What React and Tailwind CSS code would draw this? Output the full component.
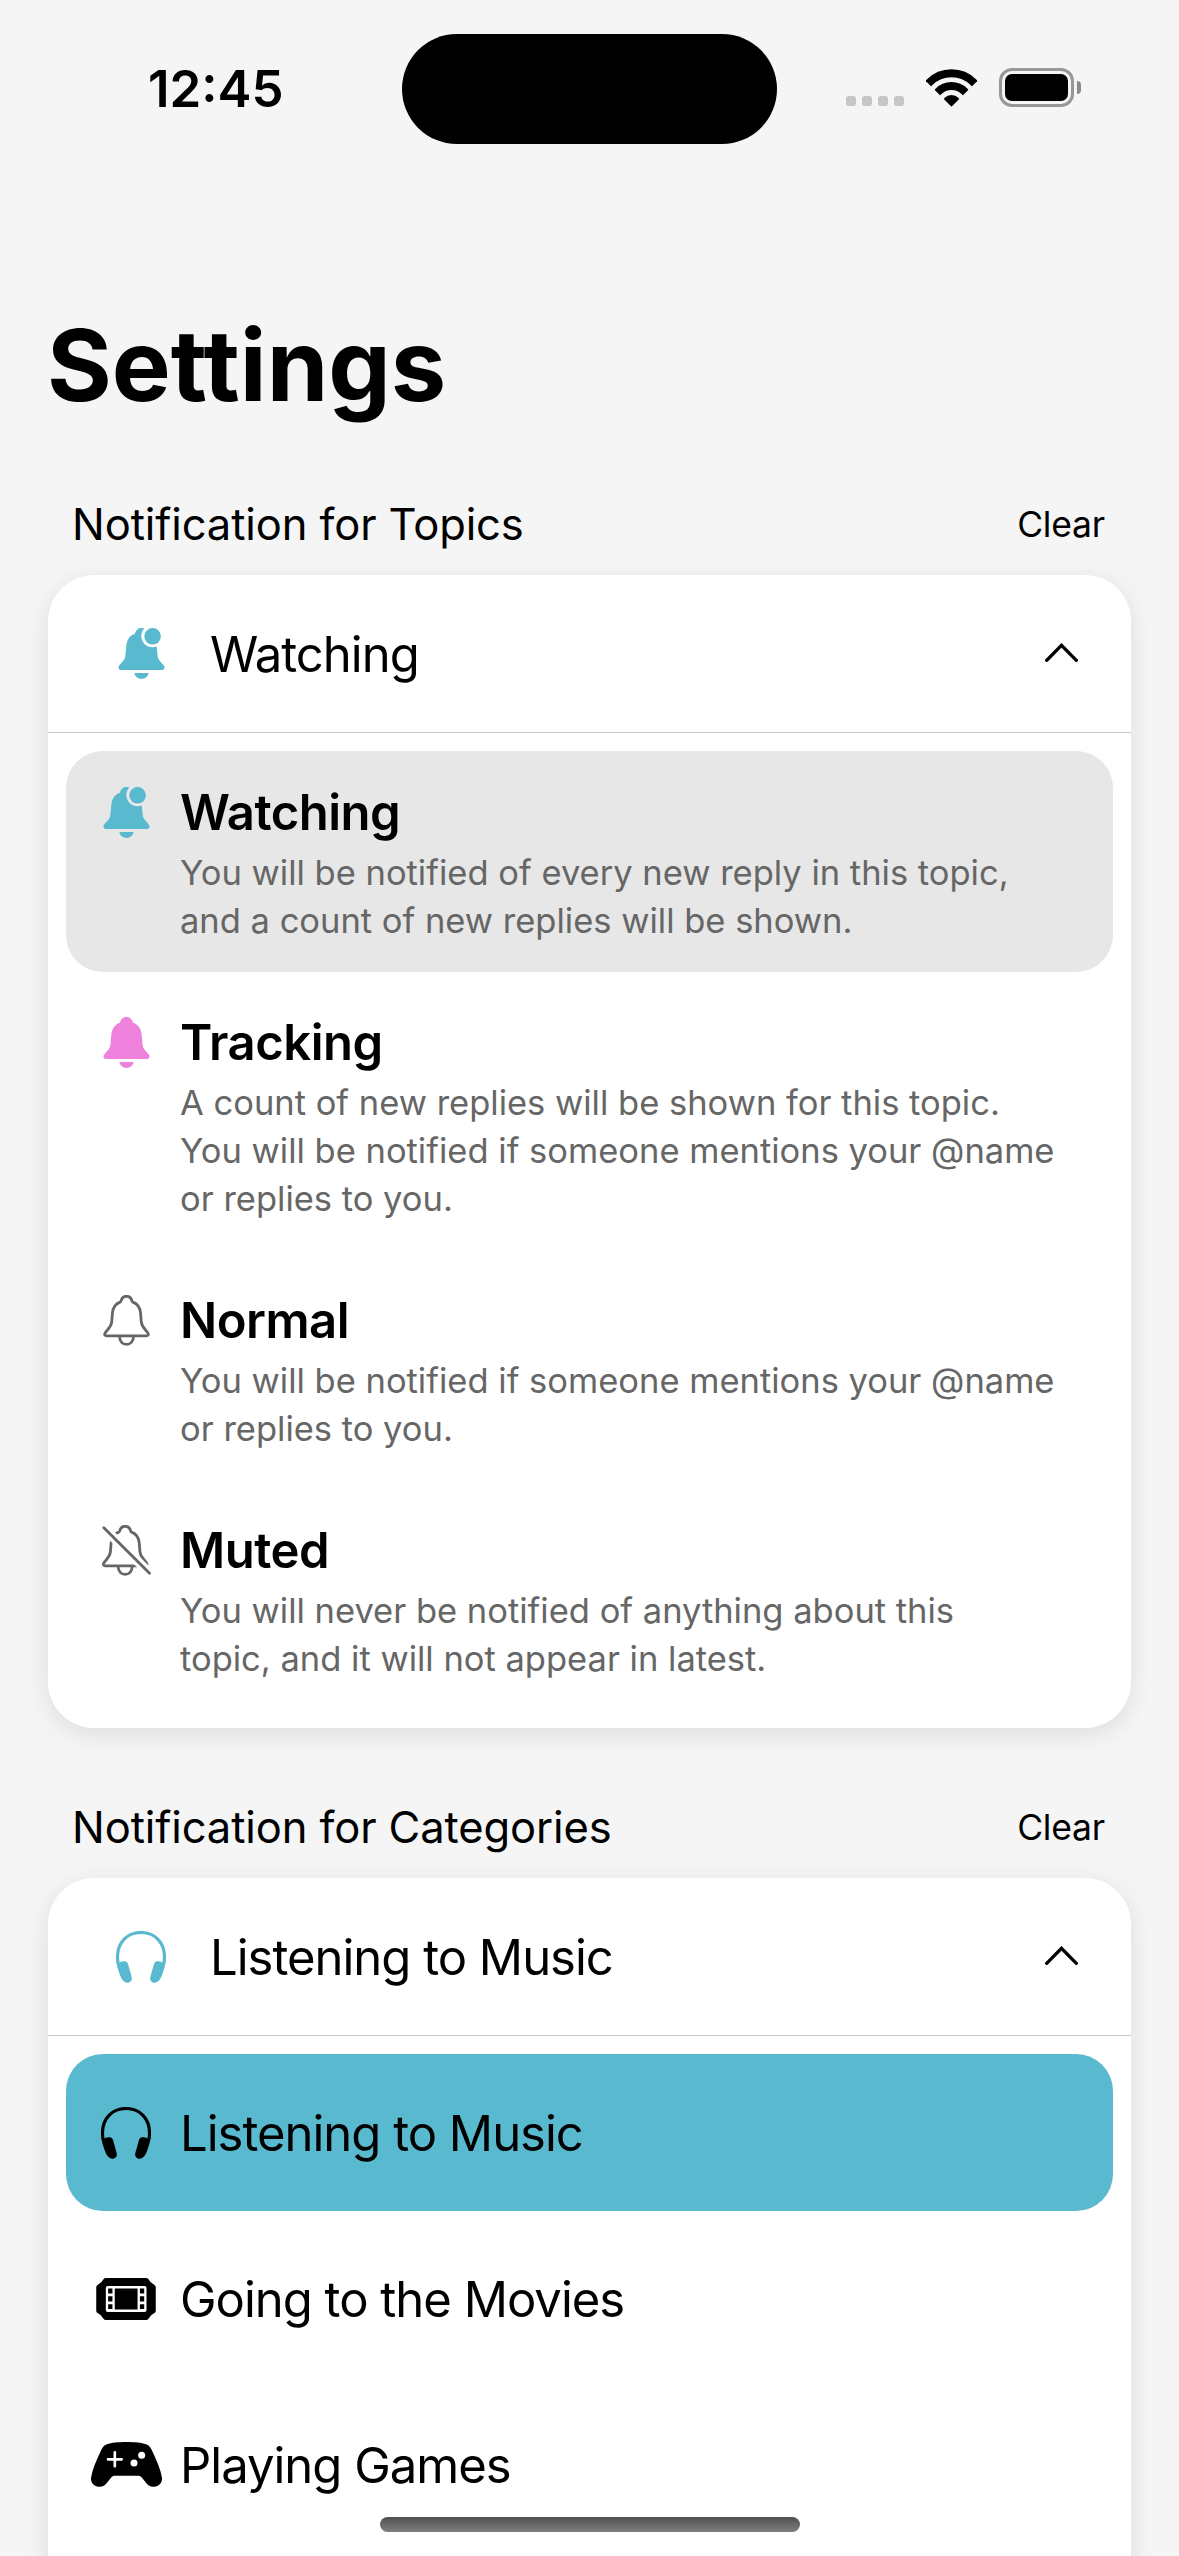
import React, { useId } from 'react';

const BELL_BODY =
  'M69.5 0C60 0 52 6 50 17C32 23 25 37 23.5 55L21 82C20 100 5 105 0 117C-1 123 3 127 8 127H131C136 127 140 123 139 117C134 105 119 100 118 82L115.5 55C114 37 107 23 89 17C87 6 79 0 69.5 0Z';
const BELL_CLAPPER = 'M48 136H91C89 147 80 154 69.5 154C59 154 50 147 48 136Z';
const BELL_OUTLINE =
  'M69.5 4C61 4 55 9 53 18Q52.5 20.500 50 21.500C35 27 28.500 38 27 55L25 80C23.500 100 10 104 4.500 116C2.500 120 4.500 123.500 9 123.500H130C134.500 123.500 136.500 120 134.500 116C129 104 115.500 100 114 80L112 55C110.500 38 104 27 89 21.500Q86.500 20.500 86 18C84 9 78 4 69.500 4Z';
const BELL_OUTLINE_CLAPPER = 'M48.500 125C48.500 141 58 149 69.500 149S90.500 141 90.500 125';
const EAR_CUP =
  'M22 91C30 89 34 93 36 99L47 138C49 146 45 154 36 155C24 156 17 146 11 130C6 116 2 102 1 90L9 95Q14 92 22 91Z';

function BellBadge() {
  const id = useId();
  return (
    <svg className="h-[51px] w-[47px] text-[#58b9cf]" viewBox="0 0 139 154" fill="currentColor">
      <mask id={id}>
        <rect x="-5" y="-5" width="150" height="165" fill="#fff" />
        <circle cx="103" cy="24" r="34" fill="#000" />
      </mask>
      <g mask={`url(#${id})`}>
        <path d={BELL_BODY} />
        <path d={BELL_CLAPPER} />
      </g>
      <circle cx="103" cy="25" r="25" />
    </svg>
  );
}

function BellFilled() {
  return (
    <svg className="h-[51px] w-[47px] text-[#ee82dc]" viewBox="0 0 139 154" fill="currentColor">
      <path d={BELL_BODY} />
      <path d={BELL_CLAPPER} />
    </svg>
  );
}

function Bell() {
  return (
    <svg className="h-[51px] w-[47px] text-[#666]" viewBox="0 0 139 154" fill="none" stroke="currentColor" strokeWidth="8.5">
      <path d={BELL_OUTLINE} />
      <path d={BELL_OUTLINE_CLAPPER} />
    </svg>
  );
}

function BellSlash() {
  const id = useId();
  return (
    <svg className="h-[51px] w-[49px] text-[#666]" viewBox="0 0 147 154" fill="none" stroke="currentColor" strokeWidth="8.5">
      <mask id={id} maskUnits="userSpaceOnUse" x="-10" y="-10" width="170" height="175">
        <rect x="-10" y="-10" width="170" height="175" fill="#fff" stroke="none" />
        <path d="M-10 -6L160 162" stroke="#000" strokeWidth="28" />
      </mask>
      <g mask={`url(#${id})`}>
        <path d={BELL_OUTLINE} />
      </g>
      <path d={BELL_OUTLINE_CLAPPER} />
      <path d="M5 8L143 146" strokeLinecap="round" />
    </svg>
  );
}

function Headphones({ className }) {
  return (
    <svg className={`h-[52px] w-[50px] ${className}`} viewBox="0 0 150 156" fill="currentColor">
      <path
        d="M6.500 96C5 90 4.500 84 4.500 78C4.500 35 33 4.500 75 4.500S145.500 35 145.500 78C145.500 84 145 90 143.500 96"
        fill="none"
        stroke="currentColor"
        strokeWidth="9.5"
      />
      <path d={EAR_CUP} />
      <path d={EAR_CUP} transform="translate(150 0) scale(-1 1)" />
    </svg>
  );
}

function Ticket() {
  return (
    <svg className="h-[42px] w-[60px]" viewBox="0 0 180 127">
      <path d="M30 0H150Q156 0 158 4Q163 15 176 21Q180 23 180 28V99Q180 104 176 106Q163 112 158 123Q156 127 150 127H30Q24 127 22 123Q17 112 4 106Q0 104 0 99V28Q0 23 4 21Q17 15 22 4Q24 0 30 0Z" />
      <rect x="29" y="24" width="123" height="79" rx="6" fill="#fff" />
      <path d="M56 32H125V95H56ZM36 32H49V47H36ZM36 55H49V71H36ZM36 79H49V94H36ZM132 32H145V47H132ZM132 55H145V71H132ZM132 79H145V94H132Z" />
    </svg>
  );
}

function Gamepad() {
  return (
    <svg className="h-[45px] w-[71px]" viewBox="0 0 213 135">
      <path d="M106 0C80 0 62 2 48 7C38 10 33 18 28 30C16 56 4 82 0 108C-1 124 12 134 26 134C36 134 42 130 48 122L60 107C64 102 67 101 72 101H141C146 101 149 102 153 107L165 122C171 130 177 134 187 134C201 134 214 124 213 108C209 82 197 56 185 30C180 18 175 10 165 7C151 2 133 0 106 0Z" />
      <path d="M51 52H92M71.500 31V73" stroke="#fff" strokeWidth="8" strokeLinecap="round" />
      <circle cx="129" cy="63" r="10.500" fill="#fff" />
      <circle cx="152" cy="40" r="10.500" fill="#fff" />
    </svg>
  );
}

function ChevronUp() {
  return (
    <svg className="mb-[2px] h-[19px] w-[33px]" viewBox="0 0 99 57" fill="none" stroke="#000" strokeWidth="10" strokeLinecap="round" strokeLinejoin="miter">
      <path d="M5 52L49.500 7L94 52" />
    </svg>
  );
}

function Wifi() {
  return (
    <svg className="h-[38px] w-[51px]" viewBox="-1 -1 153 114">
      <clipPath id="wifi-wedge">
        <path d="M75.500 112L-40 -3.500H191Z" />
      </clipPath>
      <g clipPath="url(#wifi-wedge)">
        <circle cx="75.500" cy="106" r="94" fill="none" stroke="#000" strokeWidth="24" />
        <circle cx="75.500" cy="106" r="56" fill="none" stroke="#000" strokeWidth="24" />
        <circle cx="75.500" cy="106" r="29" />
      </g>
    </svg>
  );
}

function StatusBar() {
  return (
    <div className="flex h-[144px] pt-[33px]">
      <div className="flex w-[402px] items-center pl-[148px] pb-[1px] text-[51px] font-semibold leading-none">12:45</div>
      <div className="mt-[1px] h-[110px] w-[375px] rounded-full bg-black" />
      <div className="flex flex-1 items-center pl-[69px] pb-[2px]">
        <div className="mt-[27px] flex gap-[6px]">
          {[0, 1, 2, 3].map((dot) => (
            <div key={dot} className="size-[10px] rounded-[3px] bg-[#c5c5c5]" />
          ))}
        </div>
        <div className="ml-[22px]">
          <Wifi />
        </div>
        <div className="ml-[22px] flex items-center gap-[3px]">
          <div className="h-[39px] w-[75px] rounded-[13px] border-[3px] border-[#979797] p-[3px]">
            <div className="h-full rounded-[7px] bg-black" />
          </div>
          <div className="h-[13px] w-[4px] rounded-r-full bg-[#8a8a8a]" />
        </div>
      </div>
    </div>
  );
}

function Section({ title, icon, selected, className, children }) {
  return (
    <section className="mt-[66px] px-[48px]">
      <div className="flex h-[66px] items-center justify-between pl-[24px] pr-[26px] pt-[2px]">
        <h2 className="text-[43.5px] tracking-[-0.1px]">{title}</h2>
        <button className="text-[35.5px] tracking-[-0.2px]">Clear</button>
      </div>
      <div className={`mt-[18px] rounded-[46px] bg-white shadow-[0_6px_24px_rgba(0,0,0,0.1)] ${className}`}>
        <div className="flex h-[158px] items-center border-b border-[#c6c6c6] pl-[57px] pr-[53px]">
          <div className="flex w-[72px] justify-center">{icon}</div>
          <div className="ml-[33px] flex-1 pt-[2px] text-[49px] tracking-[-1px]">{selected}</div>
          <ChevronUp />
        </div>
        <div className="flex flex-col gap-[9px] p-[18px]">{children}</div>
      </div>
    </section>
  );
}

function LevelOption({ icon, title, lines, active }) {
  return (
    <div className={`flex gap-[18px] rounded-[37px] pb-[27px] pt-[28px] pl-[24px] ${active ? 'bg-[#e7e7e7]' : ''}`}>
      <div className="flex h-[66px] w-[72px] items-center justify-center">{icon}</div>
      <div className="pt-[1px]">
        <div className="mb-[3px] text-[49px] font-semibold leading-[66px] tracking-[-0.5px]">{title}</div>
        <p className="whitespace-nowrap text-[34.5px] leading-[48px] text-[#666]">
          {lines.map((line) => (
            <span key={line} className="block">{line}</span>
          ))}
        </p>
      </div>
    </div>
  );
}

function CategoryOption({ icon, title, active }) {
  return (
    <div className={`flex h-[157px] items-center gap-[18px] rounded-[37px] pl-[24px] ${active ? 'bg-[#58b9cf]' : ''}`}>
      <div className="flex w-[72px] justify-center">{icon}</div>
      <div className="pt-[2px] text-[49px] tracking-[-1px]">{title}</div>
    </div>
  );
}

export default function App() {
  return (
    <div className="relative h-[2556px] w-[1179px] overflow-hidden bg-[#f5f5f5] font-['Inter',sans-serif] text-black">
      <StatusBar />
      <h1 className="mt-[161px] pl-[47px] text-[99px] font-bold leading-[120px]">Settings</h1>

      <Section title="Notification for Topics" icon={<BellBadge />} selected="Watching">
        <LevelOption
          active
          icon={<BellBadge />}
          title="Watching"
          lines={['You will be notified of every new reply in this topic,', 'and a count of new replies will be shown.']}
        />
        <LevelOption
          icon={<BellFilled />}
          title="Tracking"
          lines={[
            'A count of new replies will be shown for this topic.',
            'You will be notified if someone mentions your @name',
            'or replies to you.',
          ]}
        />
        <LevelOption
          icon={<Bell />}
          title="Normal"
          lines={['You will be notified if someone mentions your @name', 'or replies to you.']}
        />
        <LevelOption
          icon={<BellSlash />}
          title="Muted"
          lines={['You will never be notified of anything about this', 'topic, and it will not appear in latest.']}
        />
      </Section>

      <Section
        title="Notification for Categories"
        icon={<Headphones className="text-[#58b9cf]" />}
        selected="Listening to Music"
        className="h-[900px]"
      >
        <CategoryOption active icon={<Headphones className="text-black" />} title="Listening to Music" />
        <CategoryOption icon={<Ticket />} title="Going to the Movies" />
        <CategoryOption icon={<Gamepad />} title="Playing Games" />
      </Section>

      <div className="absolute bottom-[24px] left-[380px] h-[15px] w-[420px] rounded-full bg-linear-to-b from-[#505050] to-[#808080]" />
    </div>
  );
}
